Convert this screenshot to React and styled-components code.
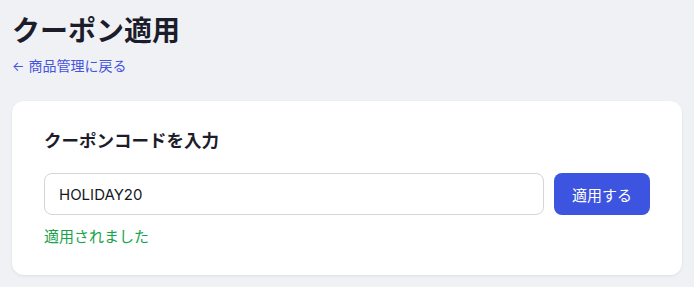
import styled, { createGlobalStyle } from 'styled-components';

const GlobalStyle = createGlobalStyle`
  * {
    box-sizing: border-box;
  }

  body {
    margin: 0;
    background: #f0f1f5;
    font-family: Inter, "Noto Sans CJK JP", sans-serif;
    color: #1c1d2b;
  }
`;

export default function App() {
  return (
    <>
      <GlobalStyle />
      <Page>
        <Title>クーポン適用</Title>
        <BackLink href="#">
          <Arrow>←</Arrow>商品管理に戻る
        </BackLink>
        <Card>
          <CardTitle>クーポンコードを入力</CardTitle>
          <FormRow>
            <CodeInput defaultValue="HOLIDAY20" />
            <ApplyButton type="button">適用する</ApplyButton>
          </FormRow>
          <Message>適用されました</Message>
        </Card>
      </Page>
    </>
  );
}

//-------------------Styled-components--------------------
const Page = styled.div`
  padding: 11px 12px 12px;
`;

const Title = styled.h1`
  margin: 0;
  font-size: 28px;
  font-weight: 700;
  line-height: 40px;
  color: #1c1d2b;
`;

const BackLink = styled.a`
  display: inline-flex;
  align-items: center;
  gap: 4px;
  margin-top: 5px;
  font-size: 14px;
  line-height: 20px;
  color: #4453e0;
  text-decoration: none;
`;

const Arrow = styled.span`
  font-family: Inter, sans-serif;
  font-size: 13px;
`;

const Card = styled.div`
  margin-top: 25px;
  padding: 28px 32px 28px;
  background: #fff;
  border-radius: 12px;
  box-shadow: 0 1px 3px rgba(20, 24, 40, 0.08);
`;

const CardTitle = styled.h2`
  margin: 0;
  font-size: 17.5px;
  font-weight: 700;
  line-height: 24px;
  color: #1c1d2b;
`;

const FormRow = styled.div`
  display: flex;
  gap: 10px;
  margin-top: 20px;
`;

const CodeInput = styled.input`
  flex: 1;
  height: 42px;
  padding: 0 14px;
  border: 1px solid #d4d5da;
  border-radius: 8px;
  font-family: Inter, "Noto Sans CJK JP", sans-serif;
  font-size: 15px;
  color: #16171f;
  outline: none;
`;

const ApplyButton = styled.button`
  height: 42px;
  padding: 0 18px;
  border: none;
  border-radius: 8px;
  background: #3d54e0;
  color: #fff;
  font-family: Inter, "Noto Sans CJK JP", sans-serif;
  font-size: 15px;
  cursor: pointer;
`;

const Message = styled.p`
  margin: 12px 0 0;
  font-size: 15px;
  line-height: 20px;
  color: #17a34a;
`;
